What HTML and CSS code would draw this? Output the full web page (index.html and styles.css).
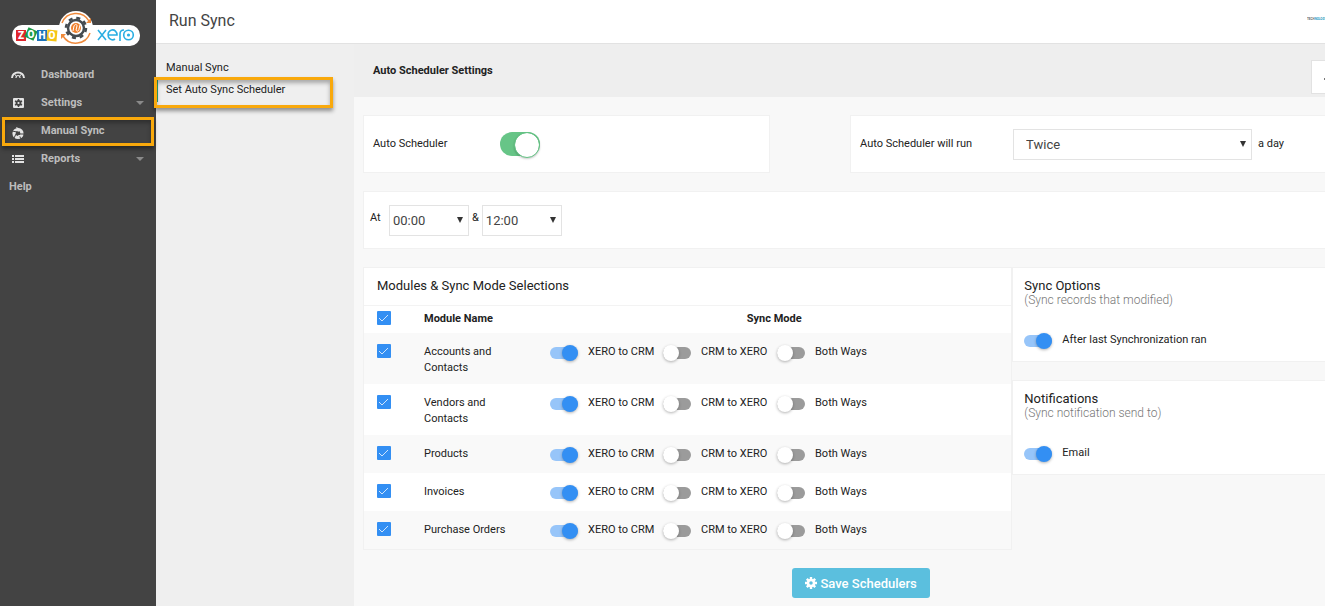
FILE: index.html
```
<!DOCTYPE html>
<html lang="en">
<head>
    <meta charset="UTF-8">
    <meta name="viewport" content="width=device-width, initial-scale=1.0">
    <title>Run Sync</title>
    <link rel="stylesheet" href="styles.css">
</head>
<body>
    <div class="app">
        <aside class="sidebar">
            <svg class="logo" viewBox="0 0 132 42" width="132" height="42" role="img" aria-label="Zoho Xero">
                <rect x="2" y="17" width="128" height="21" rx="10" fill="#fff"/>
                <circle cx="66" cy="20" r="17" fill="#fff"/>
                <rect x="6" y="22" width="10" height="11" fill="#e0262d"/>
                <rect x="16" y="21" width="10" height="10" fill="#1c9a48" transform="rotate(25 21 26)"/>
                <rect x="27" y="22" width="10" height="11" fill="#1c73b9"/>
                <rect x="37" y="22" width="10" height="11" fill="#f5c416" transform="rotate(5 42 27)"/>
                <g font-family="Roboto, sans-serif" font-weight="900" font-size="10" fill="#fff" text-anchor="middle">
                    <text x="11" y="31">Z</text>
                    <text x="21" y="30">O</text>
                    <text x="32" y="31">H</text>
                    <text x="42" y="31">O</text>
                </g>
                <g fill="none" stroke="#ef8a3c" stroke-width="1.500">
                    <path d="M52 15a15 15 0 0 1 27-2"/>
                    <path d="M80 25a15 15 0 0 1-27 3"/>
                </g>
                <path d="M81 10v5h-5zM51 31v-5h5z" fill="#ef8a3c"/>
                <circle cx="66" cy="20" r="8" fill="#fff" stroke="#454b50" stroke-width="2.500"/>
                <circle cx="66" cy="20" r="10" fill="none" stroke="#454b50" stroke-width="2.500" stroke-dasharray="4 3.850"/>
                <circle cx="66" cy="20" r="5" fill="#f0802c"/>
                <path d="M63 23l1-5c1-2 3-2 3 0l-1 4c1 2 3 1 3-1l1-4" fill="none" stroke="#fff" stroke-width="1"/>
                <g fill="none" stroke="#2aaee2" stroke-width="1.600">
                    <path d="M88 22l8 10M96 22l-8 10"/>
                    <path d="M98 27h9a4.500 5 0 1 0-2 4"/>
                    <path d="M110 33v-7q0-4 4-4"/>
                    <circle cx="118.500" cy="27" r="4.800"/>
                </g>
                <circle cx="118.500" cy="27" r="1.600" fill="#2aaee2"/>
            </svg>
            <nav>
                <ul class="menu">
                    <li>
                        <a href="#">
                            <svg class="menu-icon" viewBox="0 0 18 14"><path d="M3 10a6 5.500 0 0 1 12 0" fill="none" stroke="#e4e4e4" stroke-width="2"/><path d="M7 10a2 2.500 0 0 1 4 0" fill="none" stroke="#e4e4e4" stroke-width="1.200"/><path d="M5.500 6l2 2.500M12.500 6l-2 2.500" stroke="#e4e4e4" stroke-width="1"/></svg>
                            <span>Dashboard</span>
                        </a>
                    </li>
                    <li>
                        <a href="#">
                            <svg class="menu-icon" viewBox="0 0 18 14"><rect x="4" y="2" width="11" height="10" rx="1" fill="#e4e4e4"/><circle cx="9.500" cy="7" r="2" fill="none" stroke="#434343" stroke-width="1.800"/><path d="M9.500 3v2M9.500 9v2M6 5l2 1M11 8l2 1M6 9l2-1M11 6l2-1" stroke="#434343" stroke-width="1.500"/></svg>
                            <span>Settings</span>
                            <i class="caret"></i>
                        </a>
                    </li>
                    <li class="marked">
                        <a href="#">
                            <svg class="menu-icon low" viewBox="0 0 18 14"><circle cx="9" cy="7.500" r="4" fill="none" stroke="#e4e4e4" stroke-width="3.200"/><path d="M3 5l5 1M10 2l-1 4M15 8l-4 0M12 13L10 9M5 12l2-4" stroke="#434343" stroke-width="1"/><path d="M7 1l5 2-3 3zM9 9h3l-2 2z" fill="#e4e4e4"/></svg>
                            <span>Manual Sync</span>
                        </a>
                    </li>
                    <li>
                        <a href="#">
                            <svg class="menu-icon" viewBox="0 0 18 14"><path d="M3 4h2M3 7h2M3 10h2M6 4h9M6 7h9M6 10h9" stroke="#e4e4e4" stroke-width="1.800"/></svg>
                            <span>Reports</span>
                            <i class="caret"></i>
                        </a>
                    </li>
                    <li><a href="#">Help</a></li>
                </ul>
            </nav>
        </aside>

        <div class="page">
            <header class="topbar">
                <h1>Run Sync</h1>
                <div class="brand"><span>TECH</span>NOLOGY</div>
            </header>

            <div class="columns">
                <nav class="subnav">
                    <a href="#">Manual Sync</a>
                    <a href="#" class="current marked">Set Auto Sync Scheduler</a>
                </nav>

                <main class="content">
                    <div class="titlebar">
                        <h2>Auto Scheduler Settings</h2>
                        <button class="back" type="button" aria-label="Back">
                            <svg viewBox="0 0 6 6" width="6" height="6"><path d="M0 3h6" stroke="#777" stroke-width="2"/></svg>
                        </button>
                    </div>

                    <form class="settings">
                        <div class="row two">
                            <div class="card line">
                                <label class="toggle-label" for="auto">Auto Scheduler</label>
                                <input class="toggle" type="checkbox" id="auto" checked>
                            </div>
                            <div class="card line">
                                <label class="run-label" for="times">Auto Scheduler will run</label>
                                <select class="wide" id="times"><option>Twice</option></select>
                                <span class="after">a day</span>
                            </div>
                        </div>

                        <div class="card line hours">
                            <label for="first">At</label>
                            <select id="first"><option>00:00</option></select>
                            <label for="second">&amp;</label>
                            <select id="second"><option>12:00</option></select>
                        </div>

                        <div class="row lists">
                            <div class="card modules">
                                <h3>Modules &amp; Sync Mode Selections</h3>
                                <table>
                                    <thead>
                                        <tr>
                                            <th class="pick"><input class="check" type="checkbox" aria-label="All modules" checked></th>
                                            <th class="name">Module Name</th>
                                            <th class="mode">Sync Mode</th>
                                        </tr>
                                    </thead>
                                    <tbody>
                                        <tr>
                                            <td><input class="check" type="checkbox" id="m1" checked></td>
                                            <td><label for="m1">Accounts and Contacts</label></td>
                                            <td>
                                                <div class="modes">
                                                    <label><input class="switch" type="radio" name="s1" checked>XERO to CRM</label>
                                                    <label><input class="switch" type="radio" name="s1">CRM to XERO</label>
                                                    <label><input class="switch" type="radio" name="s1">Both Ways</label>
                                                </div>
                                            </td>
                                        </tr>
                                        <tr>
                                            <td><input class="check" type="checkbox" id="m2" checked></td>
                                            <td><label for="m2">Vendors and Contacts</label></td>
                                            <td>
                                                <div class="modes">
                                                    <label><input class="switch" type="radio" name="s2" checked>XERO to CRM</label>
                                                    <label><input class="switch" type="radio" name="s2">CRM to XERO</label>
                                                    <label><input class="switch" type="radio" name="s2">Both Ways</label>
                                                </div>
                                            </td>
                                        </tr>
                                        <tr>
                                            <td><input class="check" type="checkbox" id="m3" checked></td>
                                            <td><label for="m3">Products</label></td>
                                            <td>
                                                <div class="modes">
                                                    <label><input class="switch" type="radio" name="s3" checked>XERO to CRM</label>
                                                    <label><input class="switch" type="radio" name="s3">CRM to XERO</label>
                                                    <label><input class="switch" type="radio" name="s3">Both Ways</label>
                                                </div>
                                            </td>
                                        </tr>
                                        <tr>
                                            <td><input class="check" type="checkbox" id="m4" checked></td>
                                            <td><label for="m4">Invoices</label></td>
                                            <td>
                                                <div class="modes">
                                                    <label><input class="switch" type="radio" name="s4" checked>XERO to CRM</label>
                                                    <label><input class="switch" type="radio" name="s4">CRM to XERO</label>
                                                    <label><input class="switch" type="radio" name="s4">Both Ways</label>
                                                </div>
                                            </td>
                                        </tr>
                                        <tr>
                                            <td><input class="check" type="checkbox" id="m5" checked></td>
                                            <td><label for="m5">Purchase Orders</label></td>
                                            <td>
                                                <div class="modes">
                                                    <label><input class="switch" type="radio" name="s5" checked>XERO to CRM</label>
                                                    <label><input class="switch" type="radio" name="s5">CRM to XERO</label>
                                                    <label><input class="switch" type="radio" name="s5">Both Ways</label>
                                                </div>
                                            </td>
                                        </tr>
                                    </tbody>
                                </table>
                            </div>

                            <div class="side">
                                <section class="card option">
                                    <h3>Sync Options</h3>
                                    <p>(Sync records that modified)</p>
                                    <label><input class="switch" type="checkbox" checked>After last Synchronization ran</label>
                                </section>
                                <section class="card option">
                                    <h3>Notifications</h3>
                                    <p>(Sync notification send to)</p>
                                    <label><input class="switch" type="checkbox" checked>Email</label>
                                </section>
                            </div>
                        </div>

                        <div class="actions">
                            <button class="save" type="button">
                                <svg viewBox="0 0 12 12" width="12" height="12"><circle cx="6" cy="6" r="3" fill="none" stroke="#fff" stroke-width="2.500"/><path d="M6 0v3M6 9v3M0 6h3M9 6h3M1.800 1.800l2 2M8.200 8.200l2 2M1.800 10.200l2-2M8.200 3.800l2-2" stroke="#fff" stroke-width="2.400"/></svg>
                                Save Schedulers
                            </button>
                        </div>
                    </form>
                </main>
            </div>
        </div>
    </div>
</body>
</html>
```
FILE: styles.css
```
* {
    box-sizing: border-box;
}
body {
    margin: 0;
    font-family: Roboto, "Liberation Sans", sans-serif;
    font-size: 11px;
    line-height: 16px;
    color: #222;
    background: #f8f8f8;
    overflow-x: hidden;
}
h1, h2, h3, p, ul {
    margin: 0;
    padding: 0;
    font-weight: normal;
}
a {
    color: inherit;
    text-decoration: none;
}
.app {
    display: flex;
    min-height: 100vh;
}

/* left menu */
.sidebar {
    flex: 0 0 156px;
    background: #434343;
    color: #bdbdbd;
}
.logo {
    display: block;
    margin: 8px 0 11px 10px;
}
.menu {
    list-style: none;
}
.menu li {
    position: relative;
}
.menu a {
    display: flex;
    align-items: center;
    height: 28px;
    padding: 0 12px 0 9px;
    font-size: 11px;
    font-weight: bold;
}
.menu-icon {
    width: 18px;
    height: 14px;
    margin-right: 14px;
}
.menu-icon.low {
    margin-top: 4px;
}
.caret {
    margin-left: auto;
    border: 4px solid transparent;
    border-top-color: #8a8a8a;
    border-bottom: 0;
}

/* orange frame round a menu entry */
.marked::after {
    content: "";
    position: absolute;
    inset: 0 2px -1px 2px;
    border: 3px solid #f9a90c;
    box-shadow: 0 3px 4px rgba(0,0,0,0.4), inset 0 3px 4px rgba(0,0,0,0.3);
    pointer-events: none;
}

.page {
    flex: 1;
    min-width: 0;
    display: flex;
    flex-direction: column;
}
.topbar {
    display: flex;
    align-items: center;
    justify-content: space-between;
    height: 44px;
    padding: 0 0 2px 13px;
    background: #fff;
    border-bottom: 1px solid #e2e2e2;
}
.topbar h1 {
    font-size: 16px;
    line-height: 20px;
    color: #444;
}
.brand {
    width: 18px;
    margin-bottom: 4px;
    overflow: hidden;
    font-size: 3px;
    line-height: 6px;
    font-weight: bold;
    color: #2b9cc4;
}
.brand span {
    color: #666;
}
.columns {
    display: flex;
    flex: 1;
}
.subnav {
    flex: 0 0 198px;
    padding-top: 14px;
    background: #efefef;
}
.subnav a {
    display: block;
    position: relative;
    height: 22px;
    padding-left: 8px;
    border-left: 2px solid transparent;
    line-height: 20px;
}
.subnav .current {
    border-left-color: #26a17b;
}
.subnav .marked::after {
    inset: -3px 21px -6px -4px;
}

.content {
    flex: 1;
    min-width: 0;
}
.titlebar {
    display: flex;
    align-items: center;
    justify-content: space-between;
    height: 53px;
    padding-left: 19px;
    background: #eee;
}
.titlebar h2 {
    font-size: 11px;
    font-weight: bold;
}
.back {
    width: 14px;
    height: 34px;
    margin-top: 13px;
    padding: 0 0 0 12px;
    overflow: hidden;
    background: #fff;
    border: 1px solid #e2e2e2;
    border-right: 0;
}
.settings {
    display: flex;
    flex-direction: column;
    gap: 18px;
    padding: 18px 0 8px 9px;
}
.row {
    display: grid;
}
.two {
    grid-template-columns: 6fr 7fr;
    gap: 80px;
}
.lists {
    grid-template-columns: 27fr 13fr;
    align-items: start;
}
.card {
    background: #fff;
    border: 1px solid #f1f1f1;
}
.row > .card:last-child,
.side .card,
.hours {
    border-right: 0;
}
.line {
    display: flex;
    align-items: center;
    height: 58px;
    padding: 0 9px;
}
.toggle-label {
    width: 127px;
}
.run-label {
    width: 153px;
}
.after {
    width: 64px;
    padding-left: 6px;
}
.hours {
    padding-left: 6px;
    gap: 3px;
}
.hours label {
    margin-bottom: 4px;
}
.hours label:first-child {
    width: 16px;
}

select {
    appearance: none;
    width: 80px;
    height: 31px;
    padding: 0 3px;
    border: 1px solid #e3e3e3;
    border-radius: 0;
    font-family: inherit;
    font-size: 13px;
    color: #444;
    background: #fff url("data:image/svg+xml,%3Csvg xmlns='http://www.w3.org/2000/svg' width='6' height='6'%3E%3Cpath d='M0 0h6L3 6z' fill='%23333'/%3E%3C/svg%3E") no-repeat right 5px center;
}
select.wide {
    flex: 1;
    min-width: 0;
    padding-left: 12px;
}

.toggle,
.switch,
.check {
    appearance: none;
    position: relative;
    flex: none;
    margin: 0;
}
.toggle {
    width: 40px;
    height: 24px;
    border-radius: 12px;
    background: #67c587;
}
.toggle::after {
    content: "";
    position: absolute;
    top: 0;
    right: 0;
    width: 24px;
    height: 24px;
    border: 1px solid #67c587;
    border-radius: 50%;
    background: #fff;
    background-clip: padding-box;
    box-shadow: 0 1px 2px rgba(0,0,0,0.2);
}
.switch {
    display: flex;
    align-items: center;
    width: 28px;
    height: 16px;
    margin: 1px 10px 0 0;
}
.switch::before {
    content: "";
    width: 28px;
    height: 12px;
    border-radius: 6px;
    background: #9b9b9b;
}
.switch::after {
    content: "";
    position: absolute;
    top: 0;
    left: 0;
    width: 16px;
    height: 16px;
    border-radius: 50%;
    background: #fff;
    box-shadow: 0 1px 3px rgba(0,0,0,0.3);
}
.switch:checked::before {
    background: #97c5f9;
}
.switch:checked::after {
    left: 12px;
    background: #338ff3;
}
.check {
    display: block;
    width: 14px;
    height: 14px;
    border-radius: 1px;
    background: #338ff3 url("data:image/svg+xml,%3Csvg xmlns='http://www.w3.org/2000/svg' width='14' height='14'%3E%3Cpath d='M2 7l3 3 6-6' fill='none' stroke='%23cfe5fd'/%3E%3C/svg%3E");
}

/* module list */
.modules h3 {
    padding: 8px 13px 9px;
    font-size: 13px;
    line-height: 20px;
}
table {
    width: 100%;
    border-collapse: collapse;
    table-layout: fixed;
}
th, td {
    padding: 11px 13px 8px;
    text-align: left;
    vertical-align: top;
}
th {
    padding: 5px 13px 6px;
    border-top: 1px solid #f3f3f3;
}
td {
    height: 38px;
}
.pick {
    width: 47px;
}
.name {
    width: 126px;
}
.mode {
    text-align: center;
}
tbody tr:nth-child(odd) {
    background: #f9f9f9;
}
.modes {
    display: grid;
    grid-template-columns: 113px 114px 114px;
    height: 16px;
}
.modes label,
.option label {
    display: flex;
    align-items: center;
    height: 16px;
    white-space: nowrap;
}

.side {
    display: grid;
    gap: 18px;
}
.option {
    height: 95px;
    padding: 10px 11px;
}
.option h3 {
    font-size: 13px;
}
.option p {
    font-size: 12px;
    line-height: 13px;
    font-weight: 300;
    color: #777;
}
.option label {
    margin-top: 25px;
}

.actions {
    padding-left: 34px;
    text-align: center;
}
.save {
    height: 30px;
    padding: 0 13px;
    border: 0;
    border-radius: 3px;
    background: #5bbfde;
    color: #fff;
    font-family: inherit;
    font-size: 13px;
    font-weight: 500;
}
.save svg {
    vertical-align: -1px;
}
```
